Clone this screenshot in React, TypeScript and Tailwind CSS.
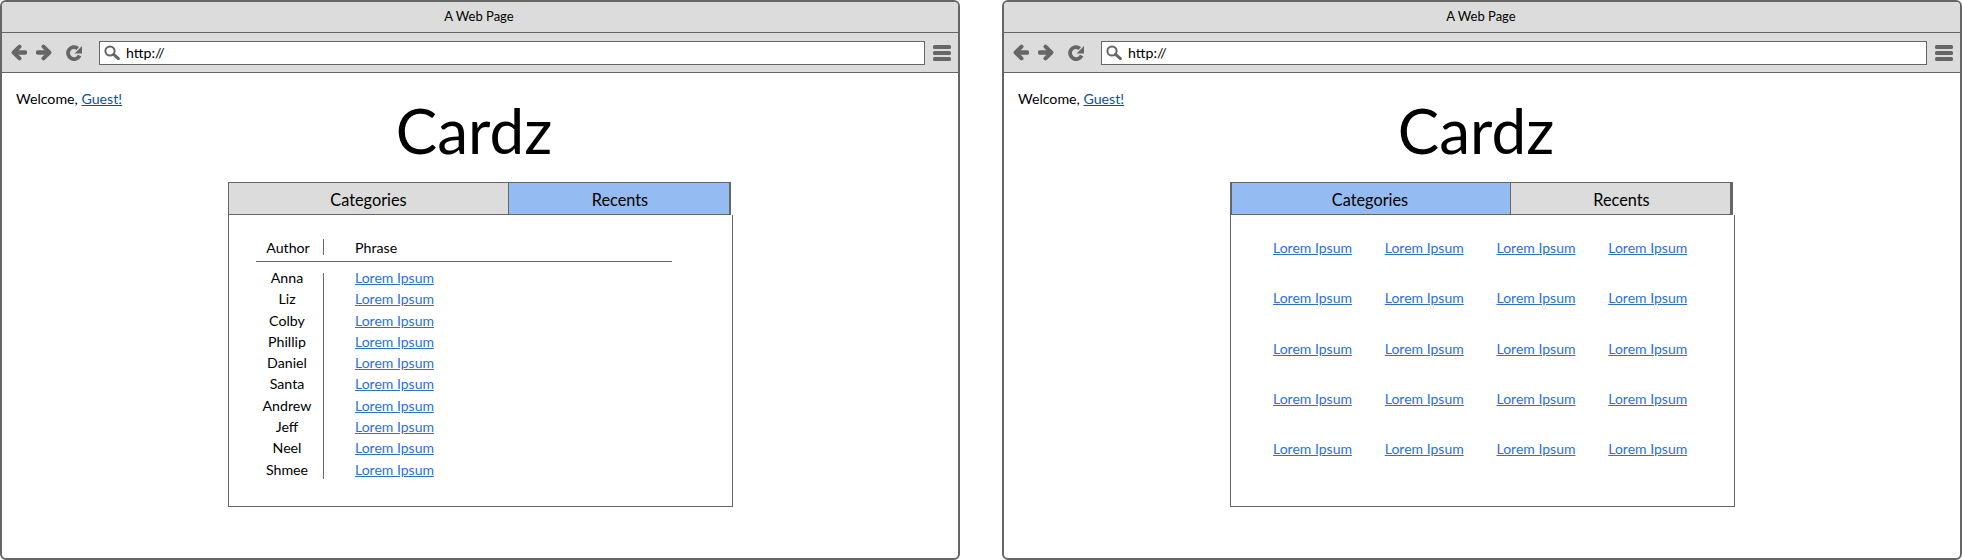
const AUTHORS = ["Anna", "Liz", "Colby", "Phillip", "Daniel", "Santa", "Andrew", "Jeff", "Neel", "Shmee"];

function BackIcon() {
  return (
    <svg viewBox="0 0 16 17" className="ml-[9px] h-[17px] w-[16px]" fill="none" stroke="#666" strokeLinecap="round" strokeLinejoin="round">
      <path d="M4 8.5H14" strokeWidth="4.4" />
      <path d="M8.5 2.6L2.6 8.5L8.5 14.4" strokeWidth="4" />
    </svg>
  );
}

function ForwardIcon() {
  return (
    <svg viewBox="0 0 16 17" className="ml-[9px] h-[17px] w-[16px]" fill="none" stroke="#666" strokeLinecap="round" strokeLinejoin="round">
      <path d="M2 8.5H12" strokeWidth="4.4" />
      <path d="M7.5 2.6L13.4 8.5L7.5 14.4" strokeWidth="4" />
    </svg>
  );
}

function RefreshIcon() {
  return (
    <svg viewBox="0 0 16 16" className="ml-[14px] h-[16px] w-[16px]">
      <path d="M13.6 10.4A6 6 0 1 1 11.8 3.4" fill="none" stroke="#666" strokeWidth="3.8" />
      <path d="M16 1V8.4H8.6Z" fill="#666" />
    </svg>
  );
}

function SearchIcon() {
  return (
    <svg viewBox="0 0 16 15" className="h-[15px] w-[16px]" fill="none" stroke="#666">
      <circle cx="6" cy="6" r="4.6" strokeWidth="2" />
      <path d="M9.6 9.4L14.4 13.6" strokeWidth="3" strokeLinecap="round" />
    </svg>
  );
}

function MenuIcon() {
  return (
    <svg viewBox="0 0 18 16" className="ml-[8px] h-[16px] w-[18px]" fill="#666">
      <rect x="0" y="0" width="18" height="4" rx="1.6" />
      <rect x="0" y="6" width="18" height="4" rx="1.6" />
      <rect x="0" y="12" width="18" height="4" rx="1.6" />
    </svg>
  );
}

function LoremLink() {
  return (
    <a href="#" className="text-[14px] text-[#2a6fdf] underline">
      Lorem Ipsum
    </a>
  );
}

function Tabs({ active }: { active: "categories" | "recents" }) {
  const isCategories = active === "categories";
  return (
    <div className="flex h-[33px] w-[503px] border-t border-[#666] text-[16.3px] text-black">
      <div
        className={`flex w-[280px] items-center justify-center border-b border-[#666] pt-[3px] ${
          isCategories ? "border-l-2 bg-[#94bbf2] pr-[2px]" : "border-l bg-[#dcdcdc]"
        }`}
      >
        Categories
      </div>
      <div
        className={`flex flex-1 items-center justify-center border-b border-l border-[#666] pl-[2px] pt-[3px] ${
          isCategories ? "border-r-[3px] bg-[#dcdcdc]" : "border-r-2 bg-[#94bbf2]"
        }`}
      >
        Recents
      </div>
    </div>
  );
}

function RecentsPanel() {
  return (
    <div className="h-[292px] w-[505px] border-x border-b border-[#666] pl-[27px] pt-[24px] text-[14.2px] text-black">
      <div className="w-[416px]">
        <div className="flex h-[23px] items-start border-b border-[#666]">
          <div className="h-[16px] w-[68px] border-r border-[#666] pr-[3px] pt-[1px] text-center leading-[16px]">Author</div>
          <div className="pl-[31px] pt-[1px] leading-[16px]">Phrase</div>
        </div>
        <div className="mt-[11px] flex">
          <div className="flex w-[68px] flex-col gap-[11.3px] border-r border-[#666] pb-[4px] pl-[1px] pr-[6px] leading-[10px]">
            {AUTHORS.map((author) => (
              <div key={author} className="text-center">
                {author}
              </div>
            ))}
          </div>
          <div className="flex flex-col gap-[11.3px] pl-[31px] leading-[10px]">
            {AUTHORS.map((author) => (
              <div key={author}>
                <LoremLink />
              </div>
            ))}
          </div>
        </div>
      </div>
    </div>
  );
}

function CategoriesPanel() {
  return (
    <div className="h-[292px] w-[505px] border-x border-b border-[#666] pl-[42px] pt-[23px]">
      <div className="grid w-[447px] grid-cols-4 gap-y-[33.3px]">
        {Array.from({ length: 20 }, (_, i) => (
          <div key={i} className="h-[17px] leading-[17px]">
            <LoremLink />
          </div>
        ))}
      </div>
    </div>
  );
}

function BrowserWindow({ active }: { active: "categories" | "recents" }) {
  return (
    <div className="h-[560px] w-[960px] rounded-[6px] border-2 border-[#666] bg-white">
      <div className="flex h-[31px] items-center justify-center rounded-t-[4px] border-b border-[#666] bg-[#dcdcdc] pb-[1px] pr-[2px] text-[13px] text-black">
        A Web Page
      </div>
      <div className="flex h-[40px] items-center border-b border-[#666] bg-[#dcdcdc]">
        <BackIcon />
        <ForwardIcon />
        <RefreshIcon />
        <div className="ml-[17px] flex h-[24px] w-[826px] items-center border border-[#666] bg-white pl-[4px]">
          <SearchIcon />
          <span className="ml-[6px] text-[14.2px] text-black">http://</span>
        </div>
        <MenuIcon />
      </div>
      <div className="pl-[14px] pt-[17px] text-[14.2px] leading-[18px] text-black">
        Welcome,{" "}
        <a href="#" className="text-[#0b5394] underline">
          Guest!
        </a>
      </div>
      <h1 className="pr-[12px] text-center text-[62px] font-normal leading-[44px] text-black">Cardz</h1>
      <div className="ml-[226px] mt-[30px]">
        <Tabs active={active} />
        {active === "recents" ? <RecentsPanel /> : <CategoriesPanel />}
      </div>
    </div>
  );
}

export default function App() {
  return (
    <div className="flex h-[560px] w-[1962px] justify-between bg-white font-['Lato',sans-serif]">
      <BrowserWindow active="recents" />
      <BrowserWindow active="categories" />
    </div>
  );
}
